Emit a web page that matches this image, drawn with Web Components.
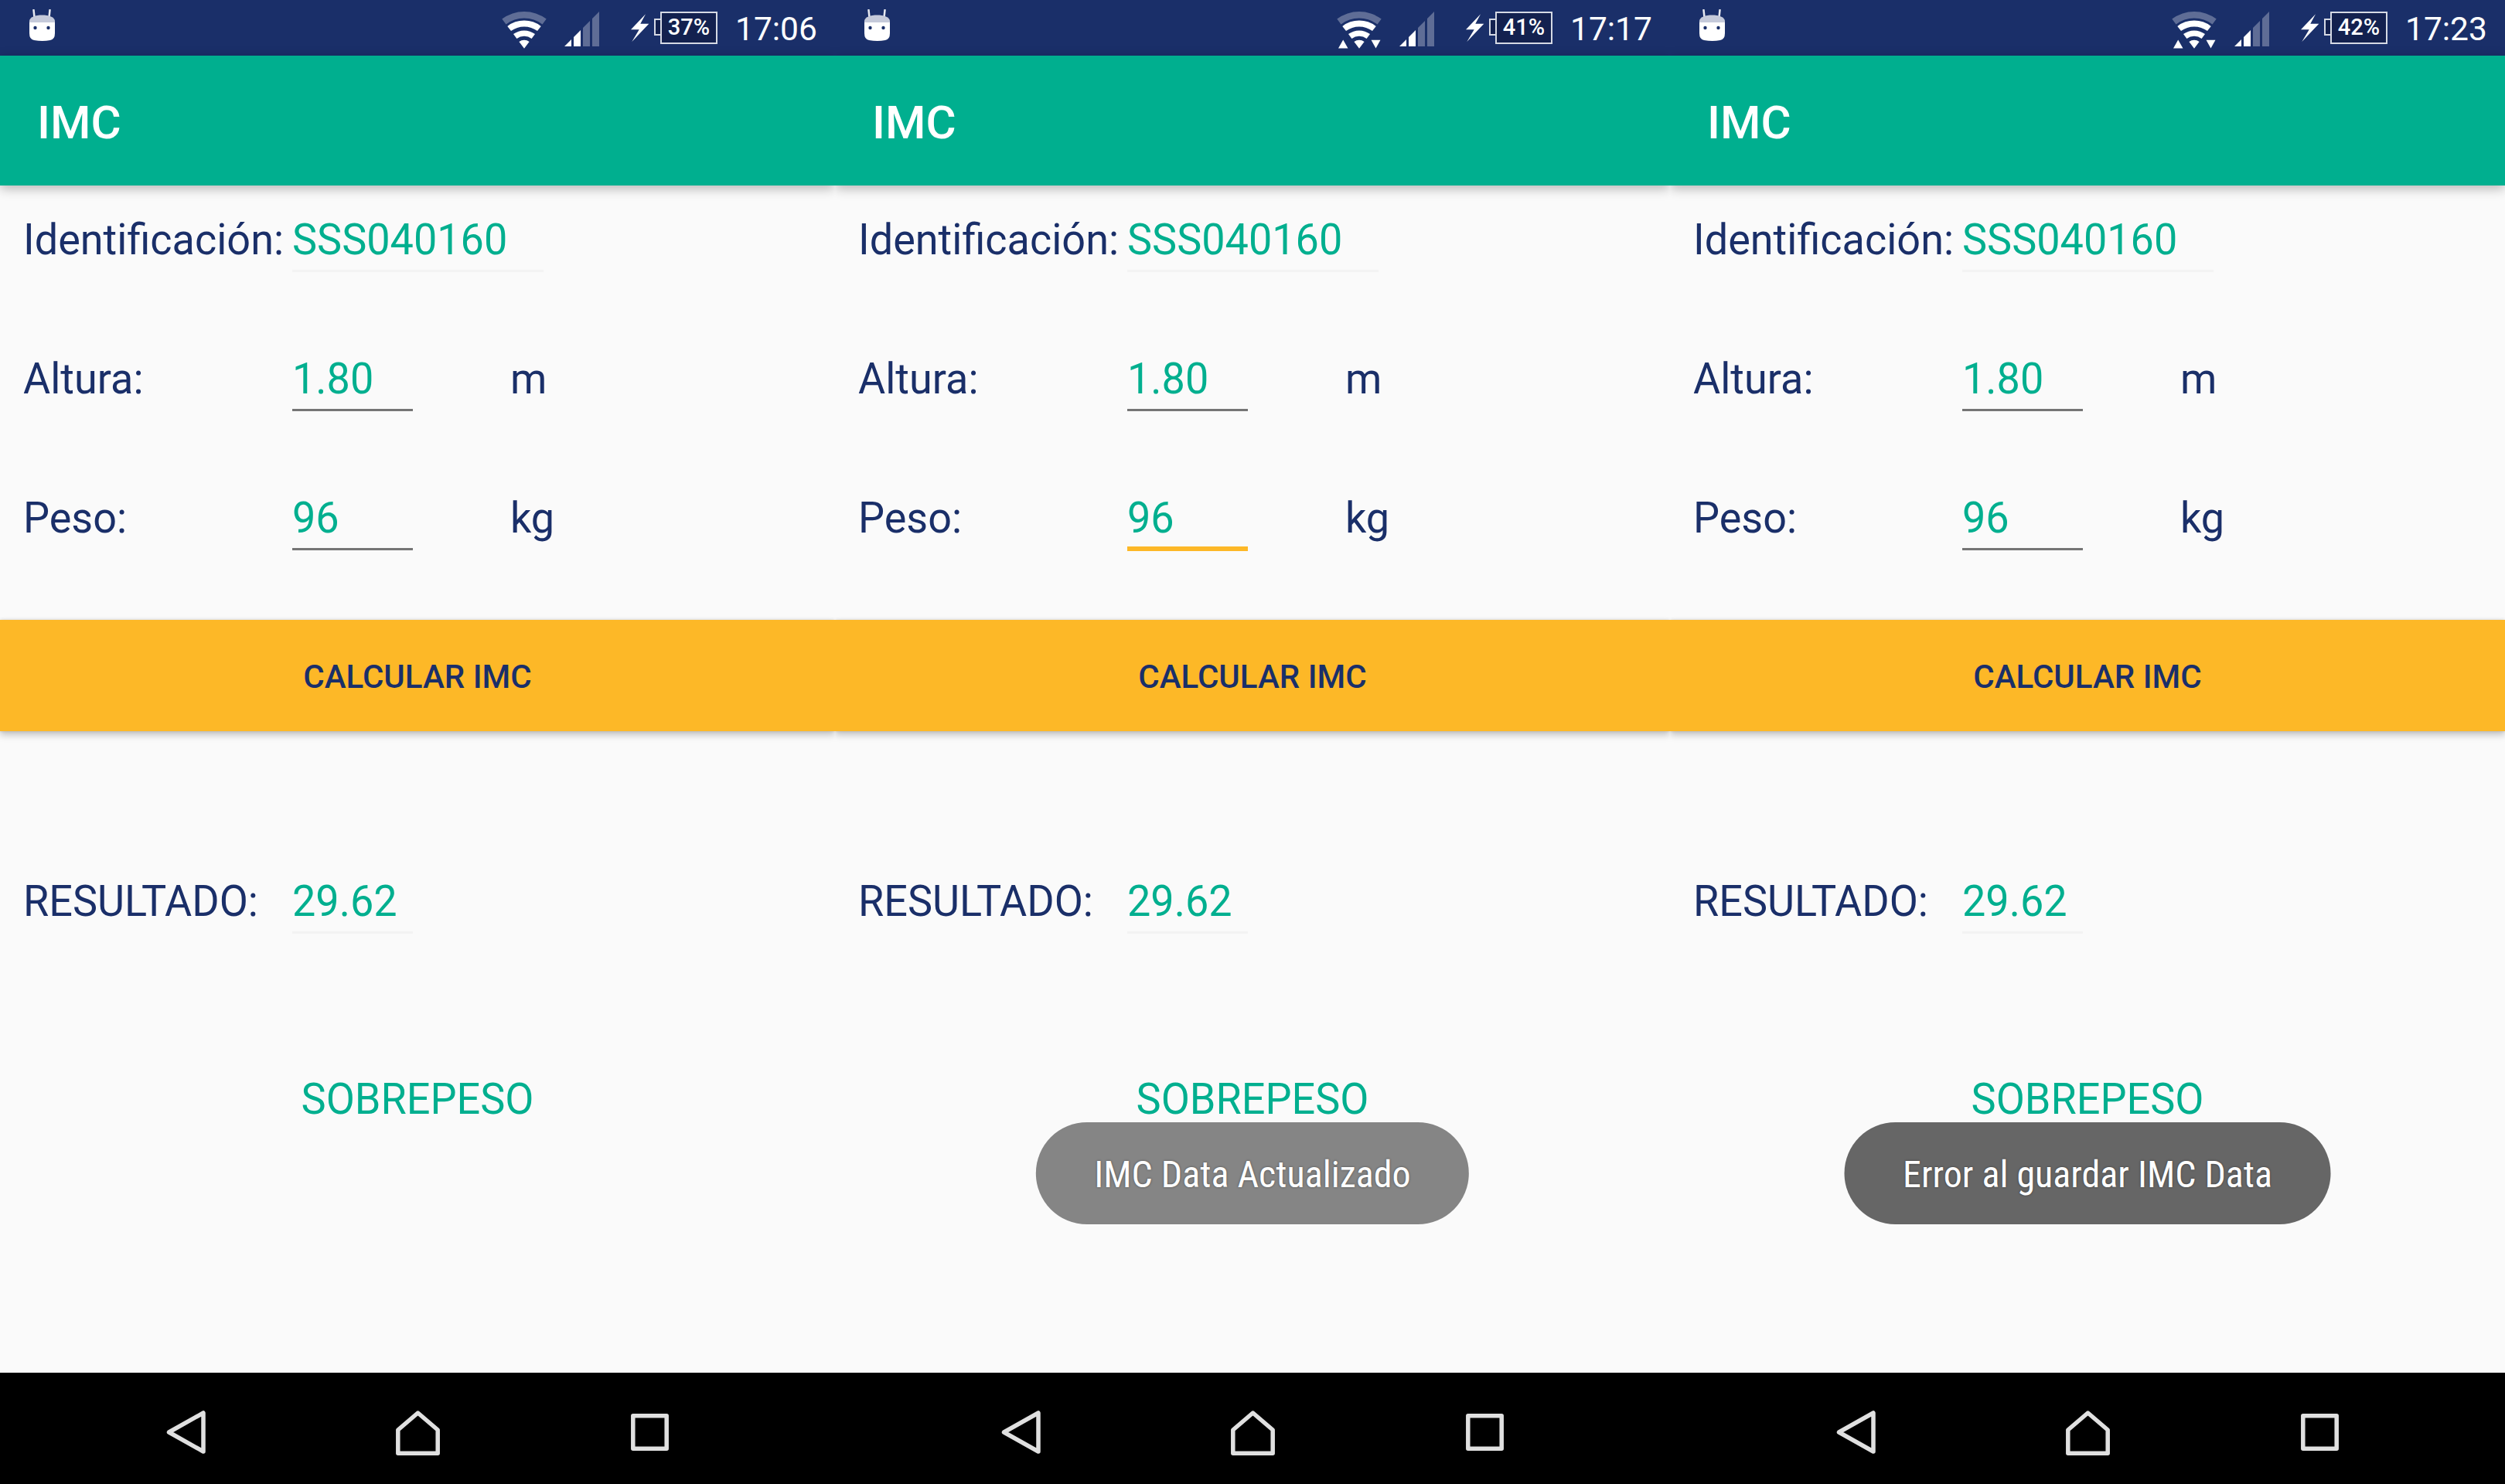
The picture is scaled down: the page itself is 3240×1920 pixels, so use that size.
<!DOCTYPE html>
<html lang="es">
<head>
<meta charset="utf-8">
<title>IMC</title>
<style>
	html, body { margin: 0; padding: 0; background: #fafafa; }
	body { display: flex; width: 3240px; height: 1920px; overflow: hidden; font-family: Roboto, "Liberation Sans", sans-serif; }
</style>
</head>
<body>
	<imc-screen battery="37%" time="17:06"></imc-screen>
	<imc-screen battery="41%" time="17:17" transfer focused toast="IMC Data Actualizado" toast-color="#858585"></imc-screen>
	<imc-screen battery="42%" time="17:23" transfer toast="Error al guardar IMC Data" toast-color="#666666"></imc-screen>

<script>
const NAVY = '#1a2f69';
const TEAL = '#00af8f';
const AMBER = '#fdb827';

// one band of the wifi fan, centred on the tip at 0,0
function wifiBand(outer, inner) {
	const sin = 0.602, cos = 0.799;
	const p = (r, side) => `${(side * r * sin).toFixed(1)} ${(-r * cos).toFixed(1)}`;
	return `M${p(outer, -1)}A${outer} ${outer} 0 0 1 ${p(outer, 1)}L${p(inner, 1)}A${inner} ${inner} 0 0 0 ${p(inner, -1)}Z`;
}

class StatusBar extends HTMLElement {
	static observedAttributes = ['battery', 'time', 'transfer'];

	constructor() {
		super();
		this.attachShadow({mode: 'open'});
	}

	connectedCallback() {
		this.render();
	}

	attributeChangedCallback() {
		this.render();
	}

	render() {
		const arrows = this.hasAttribute('transfer')
			? '<path fill="#fff" d="M-27 62.500L-20.800 51.500L-14.500 62.500ZM15.500 51.700H27.500L21.500 62.500Z"/>'
			: '';
		this.shadowRoot.innerHTML = `
		<style>
			:host {
				display: flex;
				align-items: flex-start;
				box-sizing: border-box;
				height: 72px;
				flex: none;
				background: ${NAVY};
				color: #fff;
				font-family: Roboto, "Liberation Sans", sans-serif;
			}

			svg { display: block; flex: none; }
			.bug { margin-left: 37px; margin-top: 12px; }
			.wifi { margin-left: auto; margin-top: 0; }
			.signal { margin-left: 22px; margin-top: 15px; }
			.bolt { margin-left: 41px; margin-top: 18px; }

			.battery {
				position: relative;
				box-sizing: border-box;
				width: 74px;
				height: 42px;
				margin-left: 14px;
				margin-top: 15px;
				border: 2px solid #d5d9e4;
				background: #13214f;
				font-size: 29px;
				font-weight: 500;
				line-height: 37px;
				text-align: center;
			}

			.battery::before {
				content: "";
				position: absolute;
				left: -10px;
				top: 7px;
				width: 8px;
				height: 22px;
				box-sizing: border-box;
				border: 2px solid #d5d9e4;
				border-right: 0;
				background: #13214f;
			}

			.time {
				margin-left: 23px;
				margin-right: 26px;
				margin-top: 13px;
				font-size: 42.500px;
				line-height: 50px;
				width: 103px;
				white-space: nowrap;
			}
		</style>
		<svg class="bug" width="36" height="42" viewBox="0 0 36 42">
			<path d="M8 15L6.500 1M26 15L27.500 1" stroke="#e6e8f0" stroke-width="2.500" stroke-linecap="round"/>
			<path fill="#fff" d="M1 16H34V31Q34 39 28 40Q18 42 7 40Q1 39 1 31Z"/>
			<path fill="#c5cada" d="M1 15.500C1 10 9 7.500 17.500 7.500C26 7.500 34 10 34 15.500V17H1Z"/>
			<circle cx="8.500" cy="24" r="2.200" fill="${NAVY}"/>
			<circle cx="25.500" cy="24" r="2.200" fill="${NAVY}"/>
		</svg>
		<svg class="wifi" width="60" height="72" viewBox="-30 0 60 72">
			<g transform="translate(0 62.700)">
				<path fill="#fff" fill-opacity=".3" d="${wifiBand(47.7, 39)}"/>
				<path fill="#fff" d="${wifiBand(36, 28.3)}"/>
				<path fill="#fff" d="${wifiBand(23.3, 16)}"/>
				<path fill="#fff" d="${wifiBand(11, 0)}"/>
			</g>
			${arrows}
		</svg>
		<svg class="signal" width="45" height="45" viewBox="730 15 45 45">
			<path fill="#fff" d="M730 60L739 51V60ZM742 60V48L751 39V60Z"/>
			<path fill="#fff" fill-opacity=".3" d="M754 60V36L763 27V60ZM766 60V24L775 15V60Z"/>
		</svg>
		<svg class="bolt" width="24" height="37" viewBox="816 18 24 37">
			<path fill="#fff" d="M835 18.300L816 38.300H826.700L817.300 54L839.300 30.700H828.300Z"/>
		</svg>
		<div class="battery">${this.getAttribute('battery') || ''}</div>
		<div class="time">${this.getAttribute('time') || ''}</div>
		`;
	}
}

class AppBar extends HTMLElement {
	constructor() {
		super();
		this.attachShadow({mode: 'open'});
		this.shadowRoot.innerHTML = `
		<style>
			:host {
				display: block;
				position: relative;
				z-index: 1;
				flex: none;
				box-sizing: border-box;
				height: 168px;
				padding-left: 48px;
				background: ${TEAL};
				box-shadow: 0 4px 14px rgba(0, 0, 0, .28);
				color: #fff;
				font: 500 60px/173px Roboto, "Liberation Sans", sans-serif;
			}
		</style>
		<slot></slot>
		`;
	}
}

// the device font is a little taller than Roboto at the same width
class TallText extends HTMLElement {
	constructor() {
		super();
		this.attachShadow({mode: 'open'});
		this.shadowRoot.innerHTML = `
		<style>
			:host {
				display: inline-block;
				font: 400 54px/75px Roboto, "Liberation Sans", sans-serif;
				transform: scaleY(1.04);
				transform-origin: 0 56px;
				white-space: nowrap;
			}
		</style>
		<slot></slot>
		`;
	}
}

class ImcField extends HTMLElement {
	constructor() {
		super();
		this.attachShadow({mode: 'open'});
		this.shadowRoot.innerHTML = `
		<style>
			:host {
				display: flex;
				align-items: flex-start;
				flex: none;
				box-sizing: border-box;
				height: 79px;
				padding-left: 30px;
				color: ${NAVY};
			}

			.label { width: 348px; flex: none; }

			.value {
				flex: none;
				box-sizing: border-box;
				width: var(--field-width, 156px);
				height: 79px;
				color: ${TEAL};
				border-bottom: 3px solid var(--field-line, #757575);
			}

			:host([focused]) .value {
				height: 80px;
				border-bottom: 6px solid ${AMBER};
			}

			.unit { margin-left: 126px; }
		</style>
		<div class="label"><tall-text><slot></slot></tall-text></div>
		<div class="value"><tall-text><slot name="value"></slot></tall-text></div>
		<div class="unit"><tall-text><slot name="unit"></slot></tall-text></div>
		`;
	}
}

class ActionButton extends HTMLElement {
	constructor() {
		super();
		this.attachShadow({mode: 'open'});
		this.shadowRoot.innerHTML = `
		<style>
			:host {
				display: block;
				flex: none;
				height: 144px;
				background: ${AMBER};
				box-shadow: 0 5px 9px rgba(0, 0, 0, .22), 0 0 4px rgba(0, 0, 0, .14);
				color: ${NAVY};
				font: 500 42px/148px Roboto, "Liberation Sans", sans-serif;
				text-align: center;
			}
		</style>
		<slot></slot>
		`;
	}
}

class ToastPill extends HTMLElement {
	constructor() {
		super();
		this.attachShadow({mode: 'open'});
		this.shadowRoot.innerHTML = `
		<style>
			:host {
				position: absolute;
				left: 50%;
				top: 1452px;
				transform: translateX(-50%);
				box-sizing: border-box;
				height: 132px;
				padding: 0 75.500px;
				border-radius: 66px;
				background: var(--toast-color, #858585);
				color: #fff;
				font: 400 48px/135px Roboto, "Liberation Sans", sans-serif;
				font-stretch: 85%;
				text-shadow: 0 0 3px rgba(0, 0, 0, .45);
				white-space: nowrap;
			}
		</style>
		<slot></slot>
		`;
	}
}

class NavBar extends HTMLElement {
	constructor() {
		super();
		this.attachShadow({mode: 'open'});
		this.shadowRoot.innerHTML = `
		<style>
			:host {
				display: flex;
				justify-content: center;
				align-items: center;
				flex: none;
				box-sizing: border-box;
				height: 144px;
				padding-top: 10px;
				background: #000;
			}

			.slot {
				display: flex;
				justify-content: center;
				align-items: center;
				width: 300px;
			}

			svg { display: block; }
		</style>
		<div class="slot">
			<svg width="51" height="56" viewBox="0 0 51 56" fill="none" stroke="#e0e0e0" stroke-width="5.500" stroke-linejoin="round">
				<path d="M48 3V53L3.500 28Z"/>
			</svg>
		</div>
		<div class="slot">
			<svg width="57" height="59" viewBox="0 0 57 59" fill="none" stroke="#e0e0e0" stroke-width="5.500" stroke-linejoin="round">
				<path d="M28.500 4L2.800 26V56.200H54.200V26Z"/>
			</svg>
		</div>
		<div class="slot">
			<svg width="49" height="48" viewBox="0 0 49 48" fill="none" stroke="#e0e0e0" stroke-width="5.500" stroke-linejoin="round">
				<rect x="2.800" y="2.800" width="43.400" height="42.400"/>
			</svg>
		</div>
		`;
	}
}

class ImcScreen extends HTMLElement {
	constructor() {
		super();
		this.attachShadow({mode: 'open'});
	}

	connectedCallback() {
		const battery = this.getAttribute('battery');
		const time = this.getAttribute('time');
		const transfer = this.hasAttribute('transfer') ? 'transfer' : '';
		const focused = this.hasAttribute('focused') ? 'focused' : '';
		const toast = this.getAttribute('toast');
		const toastColor = this.getAttribute('toast-color');
		this.shadowRoot.innerHTML = `
		<style>
			:host {
				display: flex;
				flex-direction: column;
				position: relative;
				flex: none;
				width: 1080px;
				height: 1920px;
				overflow: hidden;
				background: #fafafa;
			}

			main {
				display: flex;
				flex-direction: column;
				flex: 1;
				padding-top: 33px;
			}

			imc-field + imc-field { margin-top: 101px; }
			action-button { margin-top: 90px; }
			.result { margin-top: 183px; }

			.verdict {
				margin-top: 177px;
				color: ${TEAL};
				text-align: center;
			}
		</style>
		<status-bar battery="${battery}" time="${time}" ${transfer}></status-bar>
		<app-bar>IMC</app-bar>
		<main>
			<imc-field style="--field-width: 325px; --field-line: #f3f3f3">Identificación:<span slot="value">SSS040160</span></imc-field>
			<imc-field>Altura:<span slot="value">1.80</span><span slot="unit">m</span></imc-field>
			<imc-field ${focused}>Peso:<span slot="value">96</span><span slot="unit">kg</span></imc-field>
			<action-button>CALCULAR IMC</action-button>
			<imc-field class="result" style="--field-line: #f3f3f3">RESULTADO:<span slot="value">29.62</span></imc-field>
			<div class="verdict"><tall-text>SOBREPESO</tall-text></div>
		</main>
		<nav-bar></nav-bar>
		${toast ? `<toast-pill style="--toast-color: ${toastColor}">${toast}</toast-pill>` : ''}
		`;
	}
}

customElements.define('status-bar', StatusBar);
customElements.define('app-bar', AppBar);
customElements.define('tall-text', TallText);
customElements.define('imc-field', ImcField);
customElements.define('action-button', ActionButton);
customElements.define('toast-pill', ToastPill);
customElements.define('nav-bar', NavBar);
customElements.define('imc-screen', ImcScreen);
</script>
</body>
</html>
